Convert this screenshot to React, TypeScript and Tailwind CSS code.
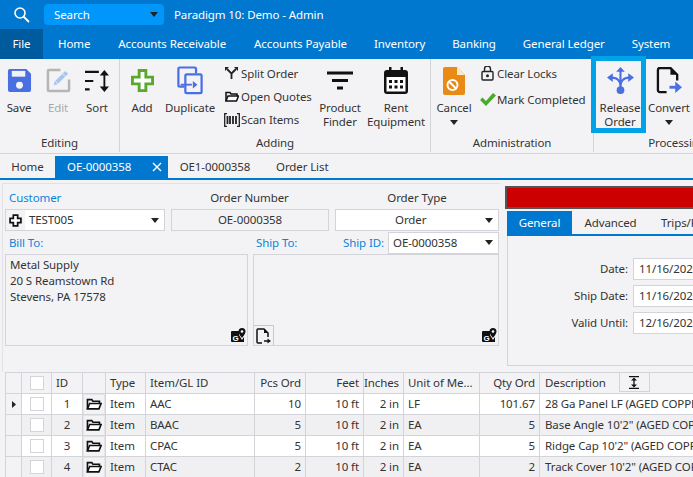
import React from "react";

const Caret = ({ className = "" }: { className?: string }) => (
  <svg width="8" height="5" viewBox="0 0 8 5" className={className}><path d="M0 0h8L4 5z" fill="#222" /></svg>
);

const SaveIcon = () => (
  <svg width="25" height="25" viewBox="0 0 26 26">
    <path d="M3 1h17l5 5v17a2 2 0 0 1-2 2H3a2 2 0 0 1-2-2V3a2 2 0 0 1 2-2z" fill="#4a6fe3" />
    <rect x="5" y="3" width="14" height="6" fill="#f3f3f6" />
    <circle cx="13" cy="18" r="3.6" fill="#f3f3f6" />
  </svg>
);
const EditIcon = () => (
  <svg width="25" height="25" viewBox="0 0 26 26">
    <path d="M15 2H3a1 1 0 0 0-1 1v20a1 1 0 0 0 1 1h20a1 1 0 0 0 1-1V12" fill="none" stroke="#b5b5b5" strokeWidth="2.6" />
    <path d="M8 18l1-4L20 3l3 3-11 11z" fill="#a9c4ee" />
    <path d="M10 14l3 3M17 6l3 3" stroke="#f3f3f6" strokeWidth="1" />
  </svg>
);
const SortIcon = () => (
  <svg width="28" height="24" viewBox="0 0 28 26">
    <path d="M1 3h15M1 13h9M1 22h5" stroke="#111" strokeWidth="2.4" />
    <path d="M22 4v18" stroke="#111" strokeWidth="2" />
    <path d="M17 7l5-6 5 6zM17 19l5 6 5-6z" fill="#111" />
  </svg>
);
const AddIcon = () => (
  <svg width="23" height="23" viewBox="0 0 24 24">
    <path d="M8.500 1.500h7v7h7v7h-7v7h-7v-7h-7v-7h7z" fill="#fff" stroke="#5aa82c" strokeWidth="3" />
  </svg>
);
const DuplicateIcon = () => (
  <svg width="26" height="29" viewBox="0 0 28 31" fill="none">
    <path d="M8 22H3a1.500 1.500 0 0 1-1.500-1.500V3A1.500 1.500 0 0 1 3 1.500h16A1.500 1.500 0 0 1 20.500 3v5" stroke="#4a6fe3" strokeWidth="2.4" />
    <rect x="9" y="9" width="17.500" height="20" rx="1.500" stroke="#4a6fe3" strokeWidth="2.4" />
    <path d="M4 20h12" stroke="#4a6fe3" strokeWidth="2" />
    <path d="M17 16l5 4-5 4z" fill="#4a6fe3" />
  </svg>
);
const SplitIcon = () => (
  <svg width="13" height="13" viewBox="0 0 13 13" fill="none">
    <path d="M6.500 12V6.500L2 2M6.500 6.500L11 2" stroke="#222" strokeWidth="1.800" />
    <path d="M0 0h4L0 4zM13 0H9l4 4z" fill="#222" />
  </svg>
);
const FolderIcon = ({ w = 14, h = 11 }: { w?: number; h?: number }) => (
  <svg width={w} height={h} viewBox="0 0 14 11" fill="none">
    <path d="M1 10V1.500h4l1 1.500h6v2" stroke="#111" strokeWidth="1.500" />
    <path d="M1 10h10.500L13.500 5H3z" stroke="#111" strokeWidth="1.500" fill="#fff" />
  </svg>
);
const BarcodeIcon = () => (
  <svg width="16" height="14" viewBox="0 0 16 14" fill="none">
    <path d="M3 .7H.7v12.600H3M13 .7h2.300v12.600H13" stroke="#222" strokeWidth="1.300" />
    <path d="M3.500 3v8M6 3v8M9 3v8M12 3v8" stroke="#222" strokeWidth="1.800" />
  </svg>
);
const FilterIcon = () => (
  <svg width="26" height="26" viewBox="0 0 26 26">
    <path d="M0 5h26M5 12.500h16M10 20h6" stroke="#111" strokeWidth="2.800" />
  </svg>
);
const CalendarIcon = () => (
  <svg width="24" height="27" viewBox="0 0 24 27">
    <rect x="0" y="3" width="24" height="24" rx="3" fill="#111" />
    <rect x="2.500" y="10" width="19" height="14.500" fill="#fff" />
    <rect x="5" y="0" width="2.500" height="5" fill="#111" />
    <rect x="16.500" y="0" width="2.500" height="5" fill="#111" />
    <path d="M5 13h3v3H5zM10.500 13h3v3h-3zM16 13h3v3h-3zM5 18.500h3v3H5zM10.500 18.500h3v3h-3zM16 18.500h3v3h-3z" fill="#111" />
  </svg>
);
const CancelIcon = () => (
  <svg width="22" height="28" viewBox="0 0 22 28">
    <path d="M2 0h12l8 8v18a2 2 0 0 1-2 2H2a2 2 0 0 1-2-2V2a2 2 0 0 1 2-2z" fill="#e88a14" />
    <path d="M14 0l8 8h-8z" fill="#fbe9d0" />
    <circle cx="9.500" cy="18" r="5" fill="none" stroke="#fff" strokeWidth="2" />
    <path d="M6 14.500l7 7" stroke="#fff" strokeWidth="2" />
  </svg>
);
const LockIcon = () => (
  <svg width="13" height="15" viewBox="0 0 13 15" fill="none">
    <rect x="1" y="5.500" width="11" height="8.500" rx="1" stroke="#222" strokeWidth="1.400" />
    <path d="M3.500 5.500V3a3 3 0 0 1 6 0v2.500" stroke="#222" strokeWidth="1.400" />
    <circle cx="6.500" cy="9.700" r="1.500" fill="#222" />
  </svg>
);
const CheckIcon = () => (
  <svg width="16" height="13" viewBox="0 0 16 13"><path d="M0 7l2.500-2.500L6 8l7-8 3 2.500L6 13z" fill="#4ca82e" /></svg>
);
const ReleaseIcon = () => (
  <svg width="27" height="27" viewBox="0 0 28 28" fill="none">
    <circle cx="14" cy="24" r="4" fill="#4a6fe3" />
    <path d="M14 3v18M14 20c0-5-3-9-9-9M14 20c0-5 3-9 9-9" stroke="#4a6fe3" strokeWidth="2.200" />
    <path d="M14 0l4.500 5h-9zM0 11l6-4.500v9zM28 11l-6-4.500v9z" fill="#4a6fe3" />
  </svg>
);
const ConvertIcon = () => (
  <svg width="26" height="27" viewBox="0 0 27 28" fill="none">
    <path d="M11 26H4a2 2 0 0 1-2-2V3a2 2 0 0 1 2-2h11l7 7v6" stroke="#111" strokeWidth="2.400" />
    <path d="M15 1l7 7h-7z" fill="#111" />
    <path d="M14 21h7" stroke="#4a6fe3" strokeWidth="3" />
    <path d="M20 15l7 6-7 6z" fill="#4a6fe3" />
  </svg>
);
const MapIcon = () => (
  <svg width="15" height="15" viewBox="0 0 15 15">
    <path d="M1 3h7v4l3 5 2-3v5H1a1 1 0 0 1-1-1V4a1 1 0 0 1 1-1z" fill="#111" />
    <path d="M11 0a3.500 3.500 0 0 1 3.500 3.500C14.500 6 11 10 11 10S7.500 6 7.500 3.500A3.500 3.500 0 0 1 11 0z" fill="#111" />
    <circle cx="11" cy="3.500" r="1.300" fill="#fff" />
    <text x="1.500" y="12.500" fontSize="8" fontWeight="700" fill="#fff" fontFamily="Liberation Sans, sans-serif">G</text>
  </svg>
);
const DocArrowIcon = () => (
  <svg width="15" height="16" viewBox="0 0 15 16" fill="none">
    <path d="M6 15H2a1 1 0 0 1-1-1V2a1 1 0 0 1 1-1h6l4 4v4" stroke="#111" strokeWidth="1.500" />
    <path d="M8 1l4 4H8z" fill="#111" />
    <path d="M8 13h4" stroke="#111" strokeWidth="1.500" />
    <path d="M11.500 10.500L15 13l-3.500 2.500z" fill="#111" />
  </svg>
);
const PlusSmall = () => (
  <svg width="13" height="13" viewBox="0 0 12 12"><path d="M4 1h4v3h3v4H8v3H4V8H1V4h3z" fill="#fff" stroke="#111" strokeWidth="1.600" /></svg>
);
const AutoIcon = () => (
  <svg width="10" height="13" viewBox="0 0 10 13">
    <path d="M0 .7h10M0 12.300h10M5 3v7" stroke="#111" strokeWidth="1.300" />
    <path d="M2 4.500L5 1.500l3 3zM2 8.500l3 3 3-3z" fill="#111" />
  </svg>
);

const Big = ({ w, icon, label, muted, caret }: { w: string; icon: React.ReactNode; label: React.ReactNode; muted?: boolean; caret?: boolean }) => (
  <div className={`${w} flex flex-col items-center`}>
    <div className="flex h-[41px] items-center justify-center">{icon}</div>
    <div className={`whitespace-nowrap text-center leading-[14px] ${muted ? "text-[#a8a8a8]" : ""}`}>{label}</div>
    {caret && <Caret className="mt-[5px]" />}
  </div>
);

const Small = ({ icon, label }: { icon: React.ReactNode; label: string }) => (
  <div className="flex h-[23px] items-center">
    <div className="flex w-[19px] justify-center">{icon}</div>
    <span className="whitespace-nowrap">{label}</span>
  </div>
);

const Group = ({ w, label, children, noBorder }: { w: string; label: string; children: React.ReactNode; noBorder?: boolean }) => (
  <div className={`${w} flex h-full shrink-0 flex-col ${noBorder ? "" : "border-r border-[#d3d3da]"}`}>
    <div className="flex h-[76px] pt-[1px]">{children}</div>
    <div className="whitespace-nowrap text-center leading-[16px]">{label}</div>
  </div>
);

const cols = "grid grid-cols-[16px_30px_31px_23px_40px_109px_51px_58px_40px_76px_60px_153px]";
const rows = [
  ["1", "AAC", "10", "LF", "101.67", "28 Ga Panel LF (AGED COPPER)"],
  ["2", "BAAC", "5", "EA", "5", `Base Angle 10'2" (AGED COPPER)`],
  ["3", "CPAC", "5", "EA", "5", `Ridge Cap 10'2" (AGED COPPER)`],
  ["4", "CTAC", "2", "EA", "2", `Track Cover 10'2" (AGED COPPER)`],
];
const headCell = "flex items-center border-r border-[#d3d3da] px-[4px] overflow-hidden whitespace-nowrap";
const cell = "flex items-center border-r border-[#d3d3da] px-[4px] overflow-hidden whitespace-nowrap";

const Box = ({ className = "", children }: { className?: string; children?: React.ReactNode }) => (
  <div className={`flex h-[22px] items-center border border-[#d3d3da] ${className}`}>{children}</div>
);

const DateRow = ({ label, value }: { label: string; value: string }) => (
  <div className="flex h-[27px] items-center justify-end">
    <span className="mr-[5px]">{label}</span>
    <div className="flex h-[22px] w-[60px] shrink-0 items-center overflow-hidden border border-r-0 border-[#d3d3da] bg-white pl-[5px] whitespace-nowrap">{value}</div>
  </div>
);

const Menu = ({ className = "ml-[27px]", children }: { className?: string; children: React.ReactNode }) => <div className={`${className} whitespace-nowrap`}>{children}</div>;

export default function App() {
  return (
    <div className="relative h-[477px] w-[693px] overflow-hidden bg-[#f3f3f6] text-[11.5px] tracking-[-0.1px] text-[#333] [font-family:'Noto_Sans',sans-serif]">
      {/* title bar */}
      <div className="flex h-[29px] items-center bg-[#0078cf] text-white">
        <svg width="17" height="17" viewBox="0 0 17 17" fill="none" className="ml-[13px]">
          <circle cx="7" cy="7" r="5" stroke="#fff" strokeWidth="1.600" />
          <path d="M10.500 10.500L16 16" stroke="#fff" strokeWidth="1.800" />
        </svg>
        <div className="ml-[14px] flex h-[21px] w-[120px] items-center justify-between rounded-[4px] bg-[#0096fa] pl-[10px] pr-[6px]">
          <span>Search</span>
          <Caret />
        </div>
        <span className="ml-[10px] whitespace-nowrap">Paradigm 10: Demo - Admin</span>
      </div>
      {/* menu */}
      <div className="flex h-[30px] items-center bg-[#0078cf] text-white">
        <div className="flex h-full w-[43px] items-center justify-center bg-[#005a9e]">File</div>
        <div className="ml-[15px]">Home</div>
        <Menu className="ml-[28px]">Accounts Receivable</Menu>
        <Menu className="ml-[28px]">Accounts Payable</Menu>
        <Menu>Inventory</Menu>
        <Menu>Banking</Menu>
        <Menu>General Ledger</Menu>
        <Menu>System</Menu>
      </div>
      {/* ribbon */}
      <div className="flex h-[95px] border-b border-[#d3d3da] pb-[1px]">
        <Group w="w-[120px]" label="Editing">
          <Big w="w-[38px]" icon={<SaveIcon />} label="Save" />
          <Big w="w-[40px]" icon={<EditIcon />} label="Edit" muted />
          <Big w="w-[38px]" icon={<SortIcon />} label="Sort" />
        </Group>
        <Group w="w-[311px]" label="Adding">
          <Big w="w-[44px]" icon={<AddIcon />} label="Add" />
          <Big w="w-[52px]" icon={<DuplicateIcon />} label="Duplicate" />
          <div className="w-[100px] pl-[6px] pt-[2px]">
            <Small icon={<SplitIcon />} label="Split Order" />
            <Small icon={<FolderIcon />} label="Open Quotes" />
            <Small icon={<BarcodeIcon />} label="Scan Items" />
          </div>
          <Big w="w-[48px]" icon={<FilterIcon />} label={<>Product<br />Finder</>} />
          <Big w="w-[64px]" icon={<CalendarIcon />} label={<>Rent<br />Equipment</>} />
        </Group>
        <Group w="w-[163px]" label="Administration">
          <Big w="w-[46px]" icon={<CancelIcon />} label="Cancel" caret />
          <div className="pl-[1px] pt-[2px]">
            <Small icon={<LockIcon />} label="Clear Locks" />
            <div className="mt-[3px]"><Small icon={<CheckIcon />} label="Mark Completed" /></div>
          </div>
        </Group>
        <Group w="w-[166px]" label="Processing" noBorder>
          <Big w="w-[52px]" icon={<ReleaseIcon />} label={<>Release<br />Order</>} />
          <Big w="w-[46px]" icon={<ConvertIcon />} label="Convert" caret />
        </Group>
      </div>
      {/* highlight */}
      <div className="absolute left-[591px] top-[56px] h-[77px] w-[55px] border-[5px] border-[#00a2e8]" />
      {/* doc tabs */}
      <div className="flex h-[26px] items-end border-b-2 border-[#0078cf] pt-[2px]">
        <div className="flex h-[22px] w-[55px] items-center justify-center">Home</div>
        <div className="flex h-[22px] w-[113px] items-center bg-[#0078cf] pl-[12px] pr-[6px] text-white">
          <span className="flex-1">OE-0000358</span>
          <svg width="10" height="10" viewBox="0 0 10 10"><path d="M1 1l8 8M9 1l-8 8" stroke="#fff" strokeWidth="1.400" /></svg>
        </div>
        <div className="flex h-[22px] w-[96px] items-center justify-center pr-[2px]">OE1-0000358</div>
        <div className="flex h-[22px] items-center pl-[12px]">Order List</div>
      </div>
      {/* form */}
      <div className="flex h-[192px] pl-[2px] pt-[3px]">
        <div className="w-[498px] shrink-0 border-l border-t border-[#e1e1e6] pl-[2px] pt-[2px]">
          <div className="flex h-[23px] w-[494px]">
            <div className="flex w-[165px] items-end pb-[3px] pl-[4px] text-[#0a84d8]">Customer</div>
            <div className="flex w-[159px] items-end justify-center pb-[3px]">Order Number</div>
            <div className="ml-[6px] flex w-[164px] items-end justify-center pb-[3px]">Order Type</div>
          </div>
          <div className="flex w-[494px]">
            <Box className="w-[21px] justify-center bg-[#f3f3f6]"><PlusSmall /></Box>
            <Box className="-ml-[1px] w-[140px] justify-between border-l-0 bg-white pl-[4px] pr-[5px]">
              <span>TEST005</span><Caret />
            </Box>
            <Box className="ml-[6px] w-[159px] justify-center">OE-0000358</Box>
            <Box className="ml-[6px] w-[164px] bg-white pr-[5px]">
              <span className="flex-1 text-center">Order</span><Caret />
            </Box>
          </div>
          <div className="flex h-[23px] w-[494px] items-center">
            <div className="w-[251px] pl-[4px] text-[#0a84d8]">Bill To:</div>
            <div className="flex-1 text-[#0a84d8]">Ship To:</div>
            <div className="mr-[4px] text-[#0a84d8]">Ship ID:</div>
            <Box className="w-[111px] justify-between bg-white pl-[4px] pr-[5px]"><span>OE-0000358</span><Caret /></Box>
          </div>
          <div className="flex h-[92px] w-[494px] gap-[5px]">
            <div className="flex w-[243px] flex-col border border-[#d3d3da] pl-[4px] pt-[2px] leading-[16px]">
              <div>Metal Supply</div>
              <div>20 S Reamstown Rd</div>
              <div>Stevens, PA 17578</div>
              <div className="mt-auto flex justify-end pb-[2px] pr-[1px]"><MapIcon /></div>
            </div>
            <div className="flex w-[246px] items-end justify-between border border-[#d3d3da]">
              <div className="flex h-[20px] w-[20px] items-center justify-center border border-b-0 border-l-0 border-[#c8c8d0]"><DocArrowIcon /></div>
              <div className="pb-[2px] pr-[1px]"><MapIcon /></div>
            </div>
          </div>
        </div>
        <div className="ml-[5px] w-[188px] shrink-0 overflow-hidden pt-[3px]">
          <div className="h-[23px] border-2 border-r-0 border-[#555] bg-[#cc0000]" />
          <div className="ml-[2px] mt-[2px] flex h-[25px] overflow-hidden border-b-2 border-[#0078cf]">
            <div className="flex w-[65px] shrink-0 items-center justify-center bg-[#0078cf] text-white">General</div>
            <div className="flex w-[77px] shrink-0 items-center justify-center">Advanced</div>
            <div className="ml-[12px] flex shrink-0 items-center whitespace-nowrap">Trips/PO</div>
          </div>
          <div className="ml-[2px] h-[130px] border-b border-l border-[#d3d3da] pt-[19px]">
            <DateRow label="Date:" value="11/16/2021" />
            <DateRow label="Ship Date:" value="11/16/2021" />
            <DateRow label="Valid Until:" value="12/16/2021" />
          </div>
        </div>
      </div>
      {/* grid */}
      <div className="ml-[5px] border-l border-t border-[#d3d3da]">
        <div className={`${cols} h-[21px] border-b border-[#d3d3da]`}>
          <div className={headCell} />
          <div className={`${headCell} justify-center`}><div className="h-[14px] w-[14px] border border-[#d3d3da] bg-white" /></div>
          <div className={headCell}>ID</div>
          <div className={headCell} />
          <div className={headCell}>Type</div>
          <div className={headCell}>Item/GL ID</div>
          <div className={`${headCell} justify-end`}>Pcs Ord</div>
          <div className={`${headCell} justify-end`}>Feet</div>
          <div className={`${headCell} justify-end`}>Inches</div>
          <div className={headCell}>Unit of Me...</div>
          <div className={`${headCell} justify-end`}>Qty Ord</div>
          <div className="flex items-center whitespace-nowrap pl-[5px]">
            <span>Description</span>
            <div className="ml-[13px] flex h-[19px] w-[31px] items-center justify-center self-start border-x border-b border-[#d3d3da]"><AutoIcon /></div>
          </div>
        </div>
        {rows.map((r, i) => (
          <div key={r[0]} className={`${cols} h-[21px] border-b border-[#d3d3da] ${i % 2 ? "bg-[#f0f0f3]" : "bg-white"}`}>
            <div className={`${cell} justify-center bg-[#f3f3f6]`}>
              {i === 0 && <svg width="4" height="7" viewBox="0 0 4 7"><path d="M0 0l4 3.500L0 7z" fill="#222" /></svg>}
            </div>
            <div className={`${cell} justify-center`}><div className="h-[14px] w-[14px] border border-[#d3d3da] bg-white" /></div>
            <div className={`${cell} justify-center`}>{r[0]}</div>
            <div className={`${cell} justify-center bg-[#e4e4ea] !px-0`}><div className="flex h-[19px] w-[20px] items-center justify-center bg-[#f3f3f6]"><FolderIcon w={16} h={12} /></div></div>
            <div className={cell}>Item</div>
            <div className={cell}>{r[1]}</div>
            <div className={`${cell} justify-end`}>{r[2]}</div>
            <div className={`${cell} justify-end`}>10 ft</div>
            <div className={`${cell} justify-end`}>2 in</div>
            <div className={cell}>{r[3]}</div>
            <div className={`${cell} justify-end`}>{r[4]}</div>
            <div className="flex items-center overflow-hidden whitespace-nowrap pl-[5px]">{r[5]}</div>
          </div>
        ))}
      </div>
    </div>
  );
}
